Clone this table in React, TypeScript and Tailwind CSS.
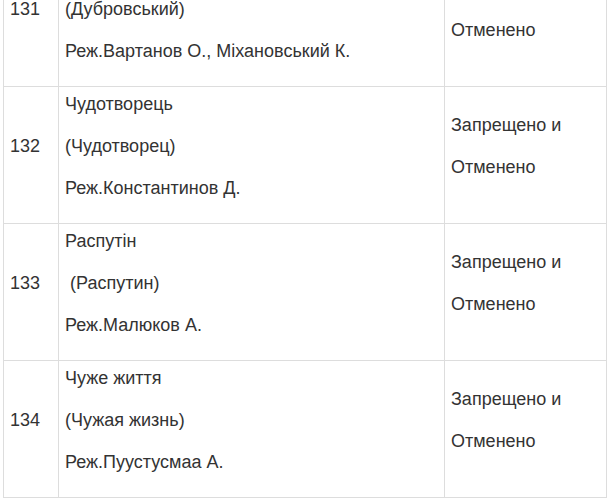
// first row is scrolled half out of view; its top lines are blank placeholders
const rows = [
  { n: '131', film: ['\u00a0', '(Дубровський)', 'Реж.Вартанов О., Міхановський К.'], status: ['\u00a0', 'Отменено'] },
  { n: '132', film: ['Чудотворець', '(Чудотворец)', 'Реж.Константинов Д.'], status: ['Запрещено и', 'Отменено'] },
  { n: '133', film: ['Распутін', '\u00a0(Распутин)', 'Реж.Малюков А.'], status: ['Запрещено и', 'Отменено'] },
  { n: '134', film: ['Чуже життя', '(Чужая жизнь)', 'Реж.Пуустусмаа А.'], status: ['Запрещено и', 'Отменено'] },
];

const Lines = ({ items }: { items: string[] }) => (
  <>
    {items.map((t, i) => (
      <p key={i} className="mb-4 leading-[26px] whitespace-pre">{t}</p>
    ))}
  </>
);

const App = () => {
  return (
    <div className="h-[498px] w-[611px] overflow-hidden bg-white">
      <table
        className="-mt-[51px] ml-[3px] w-[603px] table-fixed border-collapse text-[18px] text-[#333]"
        style={{ fontFamily: '"Liberation Sans", Arial, sans-serif' }}
      >
        <colgroup>
          <col className="w-[55px]" />
          <col className="w-[386px]" />
          <col className="w-[162px]" />
        </colgroup>
        <tbody>
          {rows.map((r) => (
            <tr key={r.n} className="h-[137px]">
              <td className="border border-[#ddd] pt-[4px] pb-[6px] pl-[6px] align-middle">
                <Lines items={[r.n]} />
              </td>
              <td className="border border-[#ddd] pt-[4px] pb-[6px] pl-[6px] align-middle">
                <Lines items={r.film} />
              </td>
              <td className="border border-[#ddd] pt-[4px] pb-[6px] pl-[6px] align-middle">
                <Lines items={r.status} />
              </td>
            </tr>
          ))}
        </tbody>
      </table>
    </div>
  );
};

export default App;
